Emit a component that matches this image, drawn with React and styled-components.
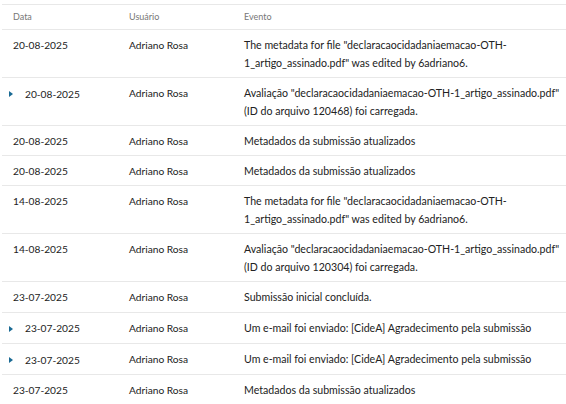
import React from 'react'
import styled, { createGlobalStyle } from 'styled-components'

const GlobalStyle = createGlobalStyle`
  body {
    margin: 0;
    background: #fff;
    font-family: Lato, "Noto Sans", sans-serif;
  }
`

const Wrapper = styled.div`
  padding: 4px 0 0 2px;
`

const Table = styled.table`
  width: 564px;
  border-collapse: collapse;
  table-layout: fixed;
  border-top: 1px solid #e8e8e8;
`

// widths are content widths: padding (11 + 8) comes on top
const HeadCell = styled.th`
  width: ${p => p.$width || 'auto'};
  padding: 3px 6px 2.5px 11px;
  text-align: left;
  font-weight: 400;
  font-size: 9px;
  line-height: 18px;
  color: #777;
`

const Row = styled.tr`
  border-top: 1px solid #e8e8e8;
  border-bottom: 1px solid #e8e8e8;
`

const Cell = styled.td`
  padding: 6px 6px 5px 11px;
  vertical-align: top;
  font-size: ${p => (p.$event ? '10.6px' : '10.2px')};
  line-height: 18.1px;
  color: #222;
`

const DateWrap = styled.span`
  display: inline-flex;
  align-items: center;
  margin-left: ${p => (p.$expandable ? '-4px' : '0')};
`

const Expander = styled.span`
  display: inline-block;
  width: 0;
  height: 0;
  margin-right: 12px;
  border-top: 3px solid transparent;
  border-bottom: 3px solid transparent;
  border-left: 4px solid #1a6a94;
`

const events = [
  { date: '20-08-2025', text: 'The metadata for file "declaracaocidadaniaemacao-OTH-1_artigo_assinado.pdf" was edited by 6adriano6.' },
  { date: '20-08-2025', more: true, text: 'Avaliação "declaracaocidadaniaemacao-OTH-1_artigo_assinado.pdf" (ID do arquivo 120468) foi carregada.' },
  { date: '20-08-2025', text: 'Metadados da submissão atualizados' },
  { date: '20-08-2025', text: 'Metadados da submissão atualizados' },
  { date: '14-08-2025', text: 'The metadata for file "declaracaocidadaniaemacao-OTH-1_artigo_assinado.pdf" was edited by 6adriano6.' },
  { date: '14-08-2025', text: 'Avaliação "declaracaocidadaniaemacao-OTH-1_artigo_assinado.pdf" (ID do arquivo 120304) foi carregada.' },
  { date: '23-07-2025', text: 'Submissão inicial concluída.' },
  { date: '23-07-2025', more: true, text: 'Um e-mail foi enviado: [CideA] Agradecimento pela submissão' },
  { date: '23-07-2025', more: true, text: 'Um e-mail foi enviado: [CideA] Agradecimento pela submissão' },
  { date: '23-07-2025', text: 'Metadados da submissão atualizados' },
]

export default function App() {
  return (
    <>
      <GlobalStyle />
      <Wrapper>
        <Table>
          <thead>
            <tr>
              <HeadCell $width="99px">Data</HeadCell>
              <HeadCell $width="98px">Usuário</HeadCell>
              <HeadCell>Evento</HeadCell>
            </tr>
          </thead>
          <tbody>
            {events.map((ev, i) => (
              <Row key={i}>
                <Cell>
                  <DateWrap $expandable={ev.more}>
                    {ev.more && <Expander />}
                    {ev.date}
                  </DateWrap>
                </Cell>
                <Cell>Adriano Rosa</Cell>
                <Cell $event>{ev.text}</Cell>
              </Row>
            ))}
          </tbody>
        </Table>
      </Wrapper>
    </>
  )
}
